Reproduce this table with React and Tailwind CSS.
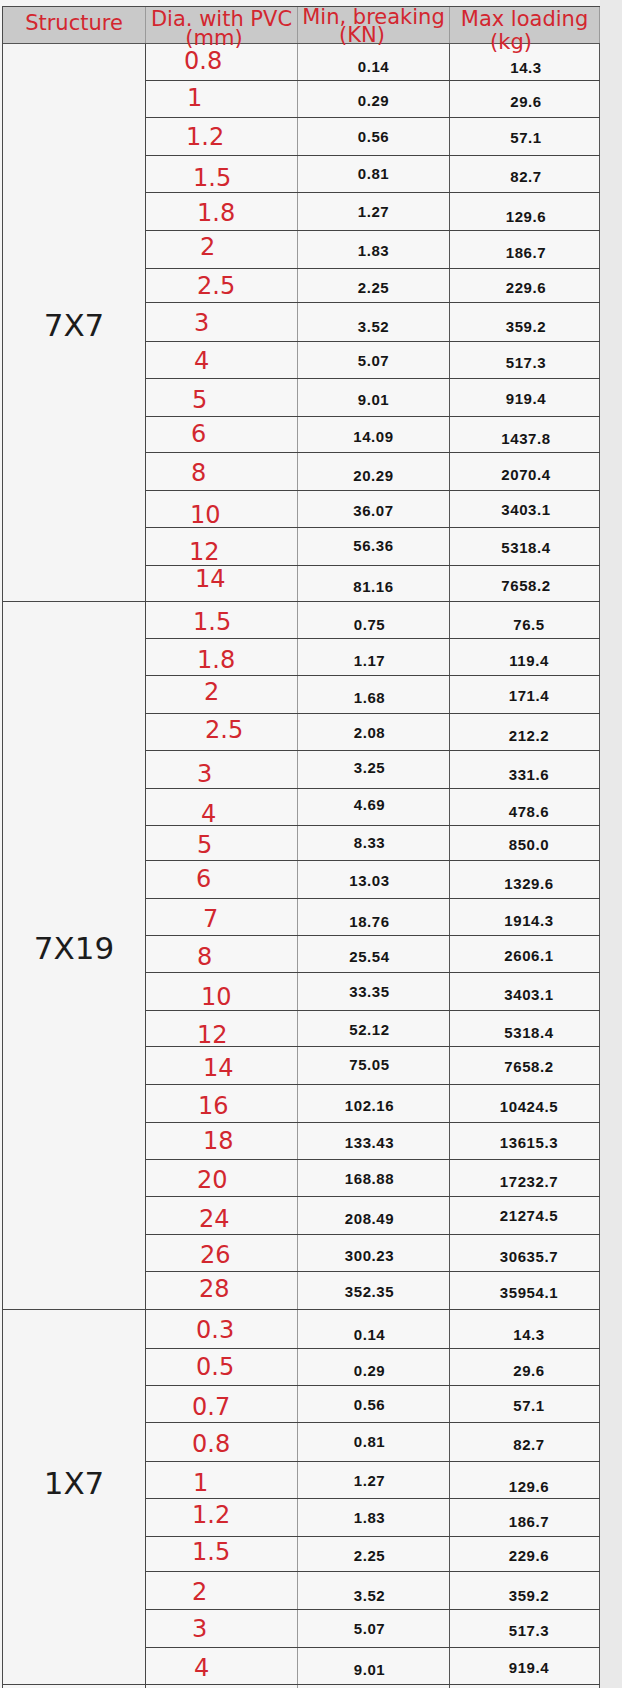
import React from "react";

// [row height, dia, dia offset, breaking, breaking offset, loading, loading offset]
const sections = [
  {
    label: "7X7",
    labelCls: "pt-[266px]",
    c3: "",
    c4: "pl-[3px]",
    rows: [
      ["h-[37px]", "0.8", "pl-[38px] pt-[5px]", "0.14", "pt-[15px]", "14.3", "pt-[16px]"],
      ["h-[37px]", "1", "pl-[41px] pt-[5px]", "0.29", "pt-[12px]", "29.6", "pt-[13px]"],
      ["h-[38px]", "1.2", "pl-[40px] pt-[7px]", "0.56", "pt-[11px]", "57.1", "pt-[12px]"],
      ["h-[37px]", "1.5", "pl-[47px] pt-[10px]", "0.81", "pt-[10px]", "82.7", "pt-[13px]"],
      ["h-[38px]", "1.8", "pl-[51px] pt-[8px]", "1.27", "pt-[11px]", "129.6", "pt-[16px]"],
      ["h-[38px]", "2", "pl-[54px] pt-[4px]", "1.83", "pt-[12px]", "186.7", "pt-[14px]"],
      ["h-[34px]", "2.5", "pl-[51px] pt-[5px]", "2.25", "pt-[11px]", "229.6", "pt-[11px]"],
      ["h-[39px]", "3", "pl-[48px] pt-[8px]", "3.52", "pt-[16px]", "359.2", "pt-[16px]"],
      ["h-[37px]", "4", "pl-[48px] pt-[7px]", "5.07", "pt-[11px]", "517.3", "pt-[13px]"],
      ["h-[38px]", "5", "pl-[46px] pt-[9px]", "9.01", "pt-[13px]", "919.4", "pt-[12px]"],
      ["h-[36px]", "6", "pl-[45px] pt-[5px]", "14.09", "pt-[12px]", "1437.8", "pt-[14px]"],
      ["h-[38px]", "8", "pl-[45px] pt-[8px]", "20.29", "pt-[15px]", "2070.4", "pt-[14px]"],
      ["h-[37px]", "10", "pl-[44px] pt-[12px]", "36.07", "pt-[12px]", "3403.1", "pt-[11px]"],
      ["h-[38px]", "12", "pl-[43px] pt-[12px]", "56.36", "pt-[10px]", "5318.4", "pt-[12px]"],
      ["h-[36px]", "14", "pl-[49px] pt-[1px]", "81.16", "pt-[13px]", "7658.2", "pt-[12px]"],
    ],
  },
  {
    label: "7X19",
    labelCls: "pt-[331px]",
    c3: "pr-[8px]",
    c4: "pl-[9px]",
    rows: [
      ["h-[37px]", "1.5", "pl-[47px] pt-[8px]", "0.75", "pt-[15px]", "76.5", "pt-[15px]"],
      ["h-[37px]", "1.8", "pl-[51px] pt-[9px]", "1.17", "pt-[14px]", "119.4", "pt-[14px]"],
      ["h-[38px]", "2", "pl-[58px] pt-[4px]", "1.68", "pt-[14px]", "171.4", "pt-[12px]"],
      ["h-[37px]", "2.5", "pl-[59px] pt-[4px]", "2.08", "pt-[11px]", "212.2", "pt-[14px]"],
      ["h-[38px]", "3", "pl-[51px] pt-[11px]", "3.25", "pt-[9px]", "331.6", "pt-[16px]"],
      ["h-[37px]", "4", "pl-[55px] pt-[13px]", "4.69", "pt-[8px]", "478.6", "pt-[15px]"],
      ["h-[35px]", "5", "pl-[51px] pt-[7px]", "8.33", "pt-[9px]", "850.0", "pt-[11px]"],
      ["h-[38px]", "6", "pl-[50px] pt-[6px]", "13.03", "pt-[12px]", "1329.6", "pt-[15px]"],
      ["h-[37px]", "7", "pl-[57px] pt-[8px]", "18.76", "pt-[15px]", "1914.3", "pt-[14px]"],
      ["h-[37px]", "8", "pl-[51px] pt-[9px]", "25.54", "pt-[13px]", "2606.1", "pt-[12px]"],
      ["h-[38px]", "10", "pl-[55px] pt-[12px]", "33.35", "pt-[11px]", "3403.1", "pt-[14px]"],
      ["h-[36px]", "12", "pl-[51px] pt-[12px]", "52.12", "pt-[11px]", "5318.4", "pt-[14px]"],
      ["h-[38px]", "14", "pl-[57px] pt-[9px]", "75.05", "pt-[10px]", "7658.2", "pt-[12px]"],
      ["h-[38px]", "16", "pl-[52px] pt-[9px]", "102.16", "pt-[13px]", "10424.5", "pt-[14px]"],
      ["h-[37px]", "18", "pl-[57px] pt-[6px]", "133.43", "pt-[12px]", "13615.3", "pt-[12px]"],
      ["h-[37px]", "20", "pl-[51px] pt-[8px]", "168.88", "pt-[11px]", "17232.7", "pt-[14px]"],
      ["h-[38px]", "24", "pl-[53px] pt-[10px]", "208.49", "pt-[14px]", "21274.5", "pt-[11px]"],
      ["h-[37px]", "26", "pl-[54px] pt-[8px]", "300.23", "pt-[13px]", "30635.7", "pt-[14px]"],
      ["h-[38px]", "28", "pl-[53px] pt-[5px]", "352.35", "pt-[12px]", "35954.1", "pt-[13px]"],
    ],
  },
  {
    label: "1X7",
    labelCls: "pt-[158px]",
    c3: "pr-[8px]",
    c4: "pl-[9px]",
    rows: [
      ["h-[39px]", "0.3", "pl-[50px] pt-[8px]", "0.14", "pt-[17px]", "14.3", "pt-[17px]"],
      ["h-[37px]", "0.5", "pl-[50px] pt-[6px]", "0.29", "pt-[14px]", "29.6", "pt-[14px]"],
      ["h-[37px]", "0.7", "pl-[46px] pt-[9px]", "0.56", "pt-[11px]", "57.1", "pt-[12px]"],
      ["h-[39px]", "0.8", "pl-[46px] pt-[9px]", "0.81", "pt-[11px]", "82.7", "pt-[14px]"],
      ["h-[37px]", "1", "pl-[47px] pt-[9px]", "1.27", "pt-[11px]", "129.6", "pt-[17px]"],
      ["h-[38px]", "1.2", "pl-[46px] pt-[4px]", "1.83", "pt-[11px]", "186.7", "pt-[15px]"],
      ["h-[35px]", "1.5", "pl-[46px] pt-[3px]", "2.25", "pt-[11px]", "229.6", "pt-[11px]"],
      ["h-[38px]", "2", "pl-[46px] pt-[8px]", "3.52", "pt-[16px]", "359.2", "pt-[16px]"],
      ["h-[38px]", "3", "pl-[46px] pt-[7px]", "5.07", "pt-[11px]", "517.3", "pt-[13px]"],
      ["h-[37px]", "4", "pl-[48px] pt-[8px]", "9.01", "pt-[14px]", "919.4", "pt-[12px]"],
    ],
  },
];

const Section = ({ section }) => (
  <div className="flex">
    <div className="w-[143px] shrink-0 border-r border-b border-[#474747] bg-[#f5f5f5]">
      <div
        className={`${section.labelCls} text-center text-[31px] leading-[31px] text-[#1c1c1c] font-['DejaVu_Sans',sans-serif]`}
      >
        {section.label}
      </div>
    </div>
    <div className="flex flex-col">
      {section.rows.map((row, i) => (
        <div key={i} className={`flex ${row[0]} border-b border-[#444]`}>
          <div
            className={`w-[152px] shrink-0 border-r border-[#9a9a9a] ${row[2]} text-[24px] leading-[24px] text-[#d2272f] font-['DejaVu_Sans',sans-serif] whitespace-nowrap`}
          >
            {row[1]}
          </div>
          <div
            className={`w-[152px] shrink-0 border-r border-[#555] ${row[4]} ${section.c3} text-center text-[15px] leading-[15px] font-bold tracking-[0.6px] text-[#151515] font-['Liberation_Sans',Arial,sans-serif]`}
          >
            {row[3]}
          </div>
          <div
            className={`w-[150px] shrink-0 border-r border-[#555] ${row[6]} ${section.c4} text-center text-[15px] leading-[15px] font-bold tracking-[0.6px] text-[#151515] font-['Liberation_Sans',Arial,sans-serif]`}
          >
            {row[5]}
          </div>
        </div>
      ))}
    </div>
  </div>
);

const App = () => {
  return (
    <div className="w-[622px] h-[1700px] bg-white">
      <div className="flex bg-[#e9e9e9]">
        <div className="w-[600px] shrink-0 bg-[#f4f4f4] pl-[2px] pt-[6px]">
          <div className="w-[598px] border-l border-t border-[#4a4a4a] bg-[#f7f7f7]">
            {/* header */}
            <div className="flex h-[37px] border-b border-[#555] bg-[#c9c9c9] text-[21px] leading-[21px] text-[#d3262f] font-['DejaVu_Sans',sans-serif] whitespace-nowrap">
              <div className="w-[143px] shrink-0 border-r border-[#9a9a9a] pt-[6px] text-center">
                Structure
              </div>
              <div className="w-[152px] shrink-0 border-r border-[#9a9a9a] pt-[2px] text-center">
                <div>Dia. with PVC</div>
                <div className="-mt-[2px] pr-[15px]">(mm)</div>
              </div>
              <div className="w-[152px] shrink-0 border-r border-[#9a9a9a] text-center">
                <div>Min, breaking</div>
                <div className="-mt-[3px] pr-[23px]">(KN)</div>
              </div>
              <div className="w-[150px] shrink-0 border-r border-[#9a9a9a] pt-[2px] text-center">
                <div>Max loading</div>
                <div className="mt-[2px] pr-[27px]">(kg)</div>
              </div>
            </div>

            {sections.map((s) => (
              <Section key={s.label} section={s} />
            ))}

            {/* top of the next row, cut off */}
            <div className="flex h-[3px]">
              <div className="w-[143px] shrink-0 border-r border-[#474747]" />
              <div className="w-[152px] shrink-0 border-r border-[#9a9a9a]" />
              <div className="w-[152px] shrink-0 border-r border-[#555]" />
              <div className="w-[150px] shrink-0 border-r border-[#555]" />
            </div>
          </div>
        </div>
        <div className="flex-1" />
      </div>
    </div>
  );
};

export default App;
